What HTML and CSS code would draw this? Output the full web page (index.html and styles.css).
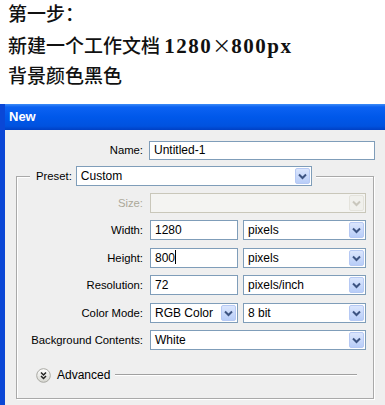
FILE: index.html
```html
<!DOCTYPE html>
<html lang="zh">

<head>
    <meta charset="UTF-8">
    <title>New</title>
    <link rel="stylesheet" href="styles.css">
</head>

<body>
    <div class="intro">
        <p class="step">第一步：</p>
        <p>新建一个工作文档 <span class="num">1280<span class="times">×</span>800px</span></p>
        <p>背景颜色黑色</p>
    </div>

    <div class="dialog">
        <div class="titlebar">New</div>
        <div class="dialog-body">
            <div class="row">
                <span class="lbl name-lbl">Name:</span>
                <div class="field name-field">Untitled-1</div>
            </div>

            <fieldset class="group">
                <legend class="preset">
                    <span class="lbl">Preset:</span>
                    <div class="select preset-select">
                        <span class="value">Custom</span>
                        <span class="arrow"><svg width="15" height="16" viewBox="0 0 15 16"><path d="M4 6.5 L7.5 10 L11 6.5" fill="none" stroke="#3d5482" stroke-width="2"/></svg></span>
                    </div>
                </legend>

                <div class="rows">
                    <div class="row">
                        <span class="lbl disabled">Size:</span>
                        <div class="select wide off">
                            <span class="value"></span>
                            <span class="arrow"><svg width="15" height="16" viewBox="0 0 15 16"><path d="M4 6.5 L7.5 10 L11 6.5" fill="none" stroke="#c9c7bd" stroke-width="2"/></svg></span>
                        </div>
                    </div>
                    <div class="row">
                        <span class="lbl">Width:</span>
                        <div class="field short">1280</div>
                        <div class="select unit">
                            <span class="value">pixels</span>
                            <span class="arrow"><svg width="15" height="16" viewBox="0 0 15 16"><path d="M4 6.5 L7.5 10 L11 6.5" fill="none" stroke="#3d5482" stroke-width="2"/></svg></span>
                        </div>
                    </div>
                    <div class="row">
                        <span class="lbl">Height:</span>
                        <div class="field short">800<span class="caret"></span></div>
                        <div class="select unit">
                            <span class="value">pixels</span>
                            <span class="arrow"><svg width="15" height="16" viewBox="0 0 15 16"><path d="M4 6.5 L7.5 10 L11 6.5" fill="none" stroke="#3d5482" stroke-width="2"/></svg></span>
                        </div>
                    </div>
                    <div class="row">
                        <span class="lbl">Resolution:</span>
                        <div class="field short">72</div>
                        <div class="select unit">
                            <span class="value">pixels/inch</span>
                            <span class="arrow"><svg width="15" height="16" viewBox="0 0 15 16"><path d="M4 6.5 L7.5 10 L11 6.5" fill="none" stroke="#3d5482" stroke-width="2"/></svg></span>
                        </div>
                    </div>
                    <div class="row">
                        <span class="lbl">Color Mode:</span>
                        <div class="select short">
                            <span class="value">RGB Color</span>
                            <span class="arrow"><svg width="15" height="16" viewBox="0 0 15 16"><path d="M4 6.5 L7.5 10 L11 6.5" fill="none" stroke="#3d5482" stroke-width="2"/></svg></span>
                        </div>
                        <div class="select unit">
                            <span class="value">8 bit</span>
                            <span class="arrow"><svg width="15" height="16" viewBox="0 0 15 16"><path d="M4 6.5 L7.5 10 L11 6.5" fill="none" stroke="#3d5482" stroke-width="2"/></svg></span>
                        </div>
                    </div>
                    <div class="row">
                        <span class="lbl">Background Contents:</span>
                        <div class="select wide">
                            <span class="value">White</span>
                            <span class="arrow"><svg width="15" height="16" viewBox="0 0 15 16"><path d="M4 6.5 L7.5 10 L11 6.5" fill="none" stroke="#3d5482" stroke-width="2"/></svg></span>
                        </div>
                    </div>
                </div>

                <div class="advanced">
                    <svg width="15" height="15" viewBox="0 0 15 15">
                        <defs>
                            <linearGradient id="adv" x1="0" y1="0" x2="0" y2="1">
                                <stop offset="0" stop-color="#ffffff"/>
                                <stop offset="1" stop-color="#d6d6d0"/>
                            </linearGradient>
                        </defs>
                        <circle cx="7.5" cy="7.5" r="6.8" fill="url(#adv)" stroke="#a8a8a2" stroke-width="1"/>
                        <path d="M5 4.5 L7.5 7 L10 4.5 M5 8 L7.5 10.5 L10 8" fill="none" stroke="#222" stroke-width="1.5"/>
                    </svg>
                    <span class="adv-text">Advanced</span>
                    <span class="adv-line"></span>
                </div>
            </fieldset>
        </div>
    </div>
</body>

</html>
```

FILE: styles.css
```css
body {
    margin: 0;
    background-color: #ffffff;
    font-family: 'Liberation Sans', Arial, sans-serif;
}

.intro {
    height: 90px;
    padding-left: 8px;
    font-family: 'Noto Sans CJK SC', sans-serif;
    font-size: 19px;
    font-weight: 500;
    color: #111;
}

.intro p {
    margin: 0;
    height: 30px;
    line-height: 30px;
    white-space: nowrap;
}

.intro .step {
    height: 26px;
    line-height: 26px;
    margin-bottom: 4px;
}

.intro .num {
    font-family: 'Liberation Serif', serif;
    font-weight: 700;
    font-size: 21px;
    letter-spacing: 1.5px;
    line-height: 1;
}

.intro .times {
    font-family: 'Noto Sans CJK SC', sans-serif;
    font-weight: 400;
    font-size: 19px;
    letter-spacing: 0;
}

.dialog {
    margin-top: 14px;
    border-left: 5px solid #0a47d6;
}

.titlebar {
    height: 26px;
    line-height: 26px;
    padding-left: 4px;
    color: #ffffff;
    font-size: 13px;
    font-weight: bold;
    background: linear-gradient(#3d8cf7 0, #0c62f2 3px, #0058ea 50%, #0052df 85%, #0040c4 100%);
}

.dialog-body {
    background-color: #efefef;
    padding: 10px 10px 9px 11px;
    font-size: 11.3px;
    color: #000;
}

.row {
    display: flex;
    align-items: center;
    height: 20px;
}

.lbl {
    text-align: right;
}

.name-lbl {
    width: 127px;
    margin-right: 6px;
}

.rows .lbl {
    width: 126px;
    margin-right: 7px;
}

.disabled {
    color: #aca899;
}

.field,
.select {
    box-sizing: border-box;
    height: 20px;
    background-color: #ffffff;
    border: 1px solid #7f9db9;
    line-height: 18px;
    font-size: 12px;
}

.field {
    padding-left: 4px;
}

.name-field {
    width: 226px;
    height: 19px;
    line-height: 17px;
}

.select {
    display: flex;
    align-items: center;
}

.select .value {
    flex: 1;
    padding-left: 4px;
}

.arrow {
    width: 15px;
    height: 16px;
    margin-right: 1px;
    border: 1px solid #b6c9f4;
    box-sizing: border-box;
    background: linear-gradient(#dbe6fd, #b8cdf8);
    border-radius: 2px;
}

.arrow svg {
    display: block;
    margin: -1px 0 0 -1px;
}

.off {
    background-color: #f4f4f2;
    border-color: #c9c7ba;
}

.off .arrow {
    background: #f0f0ec;
    border-color: #e4e3dc;
}

.short {
    width: 88px;
    margin-right: 5px;
}

.unit {
    width: 123px;
}

.wide {
    width: 216px;
}

.caret {
    display: inline-block;
    width: 1px;
    height: 14px;
    background-color: #000;
    vertical-align: -2px;
}

.group {
    margin: 6px 1px 0 0;
    padding: 7px 0 15px 0;
    border: 1px solid #a9a9a9;
    box-shadow: inset 1px 1px #ffffff, 1px 1px #ffffff;
}

.preset {
    display: flex;
    align-items: center;
    margin-left: 13px;
    padding: 0 4px 0 6px;
    background-color: #efefef;
}

.preset .lbl {
    margin-right: 4px;
}

.preset-select {
    width: 236px;
}

.rows {
    display: flex;
    flex-direction: column;
    gap: 7.4px;
}

.advanced {
    display: flex;
    align-items: center;
    margin-top: 18px;
    padding-left: 19px;
    height: 15px;
}

.adv-text {
    margin-left: 6px;
    font-size: 12px;
}

.adv-line {
    flex: 1;
    height: 1px;
    margin: 0 16px 0 5px;
    background-color: #a0a0a0;
    border-bottom: 1px solid #ffffff;
}
```
